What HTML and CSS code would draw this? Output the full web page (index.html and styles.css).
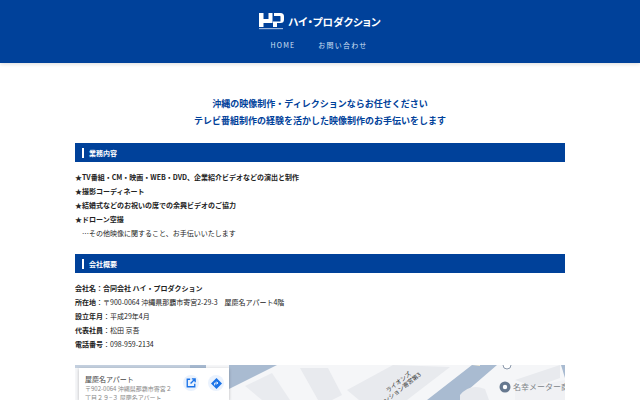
FILE: index.html
```html
<!DOCTYPE html>
<html lang="ja">
<head>
  <meta charset="UTF-8" />
  <title>ハイ・プロダクション</title>
  <link rel="stylesheet" href="styles.css">
</head>
<body>

  <div class="header">
    <div class="logo">
      <svg class="logo-mark" width="25" height="17" viewBox="0 0 25 17">
        <path d="M0 0h4.500v6h5V0h4v10H4.500v4H0z" fill="#fff"/>
        <path d="M15 0h6.500q3.500 0 3.500 3.500v3q0 3.500-3.500 3.500H18v4h-4v-5.500h7q.5 0 .5-.5V3.500q0-.5-.5-.5H15z" fill="#fff"/>
        <path d="M0 15h24v1.200H0z" fill="#9db6dc"/>
      </svg>
      <span class="logo-text">ハイ・プロダクション</span>
    </div>
    <div class="nav">
      <a class="nav-home">HOME</a>
      <a>お問い合わせ</a>
    </div>
  </div>

  <div class="main">
    <div class="lead">
      <p>沖縄の映像制作・ディレクションならお任せください</p>
      <p>テレビ番組制作の経験を活かした映像制作のお手伝いをします</p>
    </div>

    <div class="section-title"><span>業務内容</span></div>
    <ul class="list">
      <li class="strong">★TV番組・CM・映画・WEB・DVD、企業紹介ビデオなどの演出と制作</li>
      <li class="strong">★撮影コーディネート</li>
      <li class="strong">★結婚式などのお祝いの席での余興ビデオのご協力</li>
      <li class="strong">★ドローン空撮</li>
      <li class="indent">…その他映像に関すること、お手伝いいたします</li>
    </ul>

    <div class="section-title"><span>会社概要</span></div>
    <ul class="list">
      <li class="strong">会社名：合同会社 ハイ・プロダクション</li>
      <li><b>所在地</b>：〒900-0064 沖縄県那覇市寄宮2-29-3　屋慶名アパート4階</li>
      <li><b>設立年月</b>：平成29年4月</li>
      <li><b>代表社員</b>：松田 京吾</li>
      <li><b>電話番号</b>：098-959-2134</li>
    </ul>

    <div class="map">
      <svg class="map-bg" width="490" height="35" viewBox="0 0 490 35">
        <rect width="490" height="35" fill="#f5f6f8"/>
        <path d="M0 0h115v3H0z" fill="#c3cfde"/>
        <path d="M115 0h16v3h-16z" fill="#a6b9d0"/>
        <path d="M154 0h48l-48 24z" fill="#a9bbd1"/>
        <path d="M170 21l27-13 18 27h-28z" fill="#e9ebef"/>
        <path d="M225 3l28 0 14 27-10 5h-14z" fill="#e8eaee"/>
        <path d="M272 25l46-25 57 2-43 33h-48z" fill="#e8eaee"/>
        <path d="M352 35l45-35h25l-29 25v10z" fill="#a9bbd1"/>
        <path d="M397 0h8v1z" fill="#f3ecd8"/>
        <path d="M385 30q10-12 25-6l4 11h-29z" fill="#e8eaee"/>
        <path d="M440 15l45-15v13l-25 9z" fill="#e8eaee"/>
        <path d="M486 0h4v13z" fill="#a9bbd1"/>
        <path d="M440 25l50-10v20h-50z" fill="#f0f1f4"/>
        <circle cx="432" cy="0" r="4" fill="#fff" stroke="#8b98aa"/>
        <circle cx="430" cy="22" r="5.500" fill="#66788f"/>
        <circle cx="430" cy="22" r="2.200" fill="#fff"/>
        <text class="map-label" x="438" y="25">名幸メーター商会</text>
        <text class="map-road" transform="translate(313 28) rotate(-38)">ライオンズ</text>
        <text class="map-road" transform="translate(306 42) rotate(-38)">マンション寄宮第3</text>
      </svg>
      <div class="map-card">
        <div class="map-info">
          <div class="map-name">屋慶名アパート</div>
          <div class="map-address">〒902-0064 沖縄県那覇市寄宮２丁目２９−３ 屋慶名アパート</div>
        </div>
        <div class="map-btn">
          <svg width="10" height="10" viewBox="0 0 12 12"><path d="M5 1.500H1.500v9h9V7M7 1h4v4M11 1L5.500 6.500" fill="none" stroke="#1a73e8" stroke-width="1.600"/></svg>
        </div>
        <div class="map-btn">
          <svg width="11" height="11" viewBox="0 0 12 12"><path d="M6 0l6 6-6 6-6-6z" fill="#1a73e8"/><path d="M4 8V5.500h3M6 4l1.500 1.500L6 7" fill="none" stroke="#fff" stroke-width="1"/></svg>
        </div>
      </div>
    </div>
  </div>

</body>
</html>
```

FILE: styles.css
```css
* {
  box-sizing: border-box;
  margin: 0;
  padding: 0;
}

body {
  font-family: "Noto Sans CJK JP", "Noto Sans", sans-serif;
  background-color: #ffffff;
  color: #222222;
  height: 400px;
  overflow: hidden;
}

.header {
  background-color: #00419a;
  height: 63px;
  padding-top: 13px;
  box-shadow: 0 1px 4px rgba(0, 0, 0, 0.15);
}

.logo {
  display: flex;
  justify-content: center;
  align-items: center;
  gap: 4px;
  height: 17px;
}

.logo-mark {
  flex: none;
}

.logo-text {
  color: #ffffff;
  font-size: 10.500px;
  font-weight: 700;
  font-feature-settings: "palt";
  white-space: nowrap;
}

.nav {
  display: flex;
  justify-content: center;
  gap: 23px;
  margin-top: 9px;
  padding-right: 2px;
  color: #d3e0f5;
  font-size: 7px;
  line-height: 12px;
  letter-spacing: 1.200px;
}

.main {
  width: 490px;
  margin: 0 auto;
  padding-top: 32px;
}

.lead {
  color: #00419a;
  font-size: 9px;
  font-weight: 700;
  line-height: 17px;
  text-align: center;
  margin-bottom: 14px;
}

.section-title {
  background-color: #00419a;
  height: 19px;
  padding-left: 7px;
  display: flex;
  align-items: center;
}

.section-title span {
  color: #ffffff;
  font-size: 7px;
  font-weight: 700;
  line-height: 10px;
  padding-left: 5px;
  border-left: 2px solid #ffffff;
}

.list {
  list-style: none;
  padding: 8px 0 14px;
  font-size: 7px;
  line-height: 14px;
}

.strong,
.list b {
  font-weight: 700;
}

.indent {
  padding-left: 7px;
}

.map {
  position: relative;
  width: 490px;
  height: 35px;
}

.map-bg {
  display: block;
}

.map-label {
  font-size: 8px;
  fill: #80858a;
}

.map-road {
  font-size: 6px;
  fill: #333333;
}

.map-card {
  position: absolute;
  top: 3px;
  left: 4px;
  width: 150px;
  height: 32px;
  background-color: #ffffff;
  display: flex;
  padding: 6px 5px 0 6px;
  overflow: hidden;
  box-shadow: 0 1px 3px rgba(0, 0, 0, 0.25);
}

.map-info {
  width: 92px;
  margin-right: 6px;
}

.map-name {
  font-size: 7px;
  line-height: 10px;
  color: #444444;
}

.map-address {
  font-size: 6px;
  line-height: 9px;
  color: #888888;
}

.map-btn {
  flex: none;
  width: 16px;
  height: 16px;
  margin-top: 1px;
  border-radius: 50%;
  background-color: #eaf2fd;
  display: flex;
  align-items: center;
  justify-content: center;
}

.map-btn + .map-btn {
  margin-left: 9px;
}
```
